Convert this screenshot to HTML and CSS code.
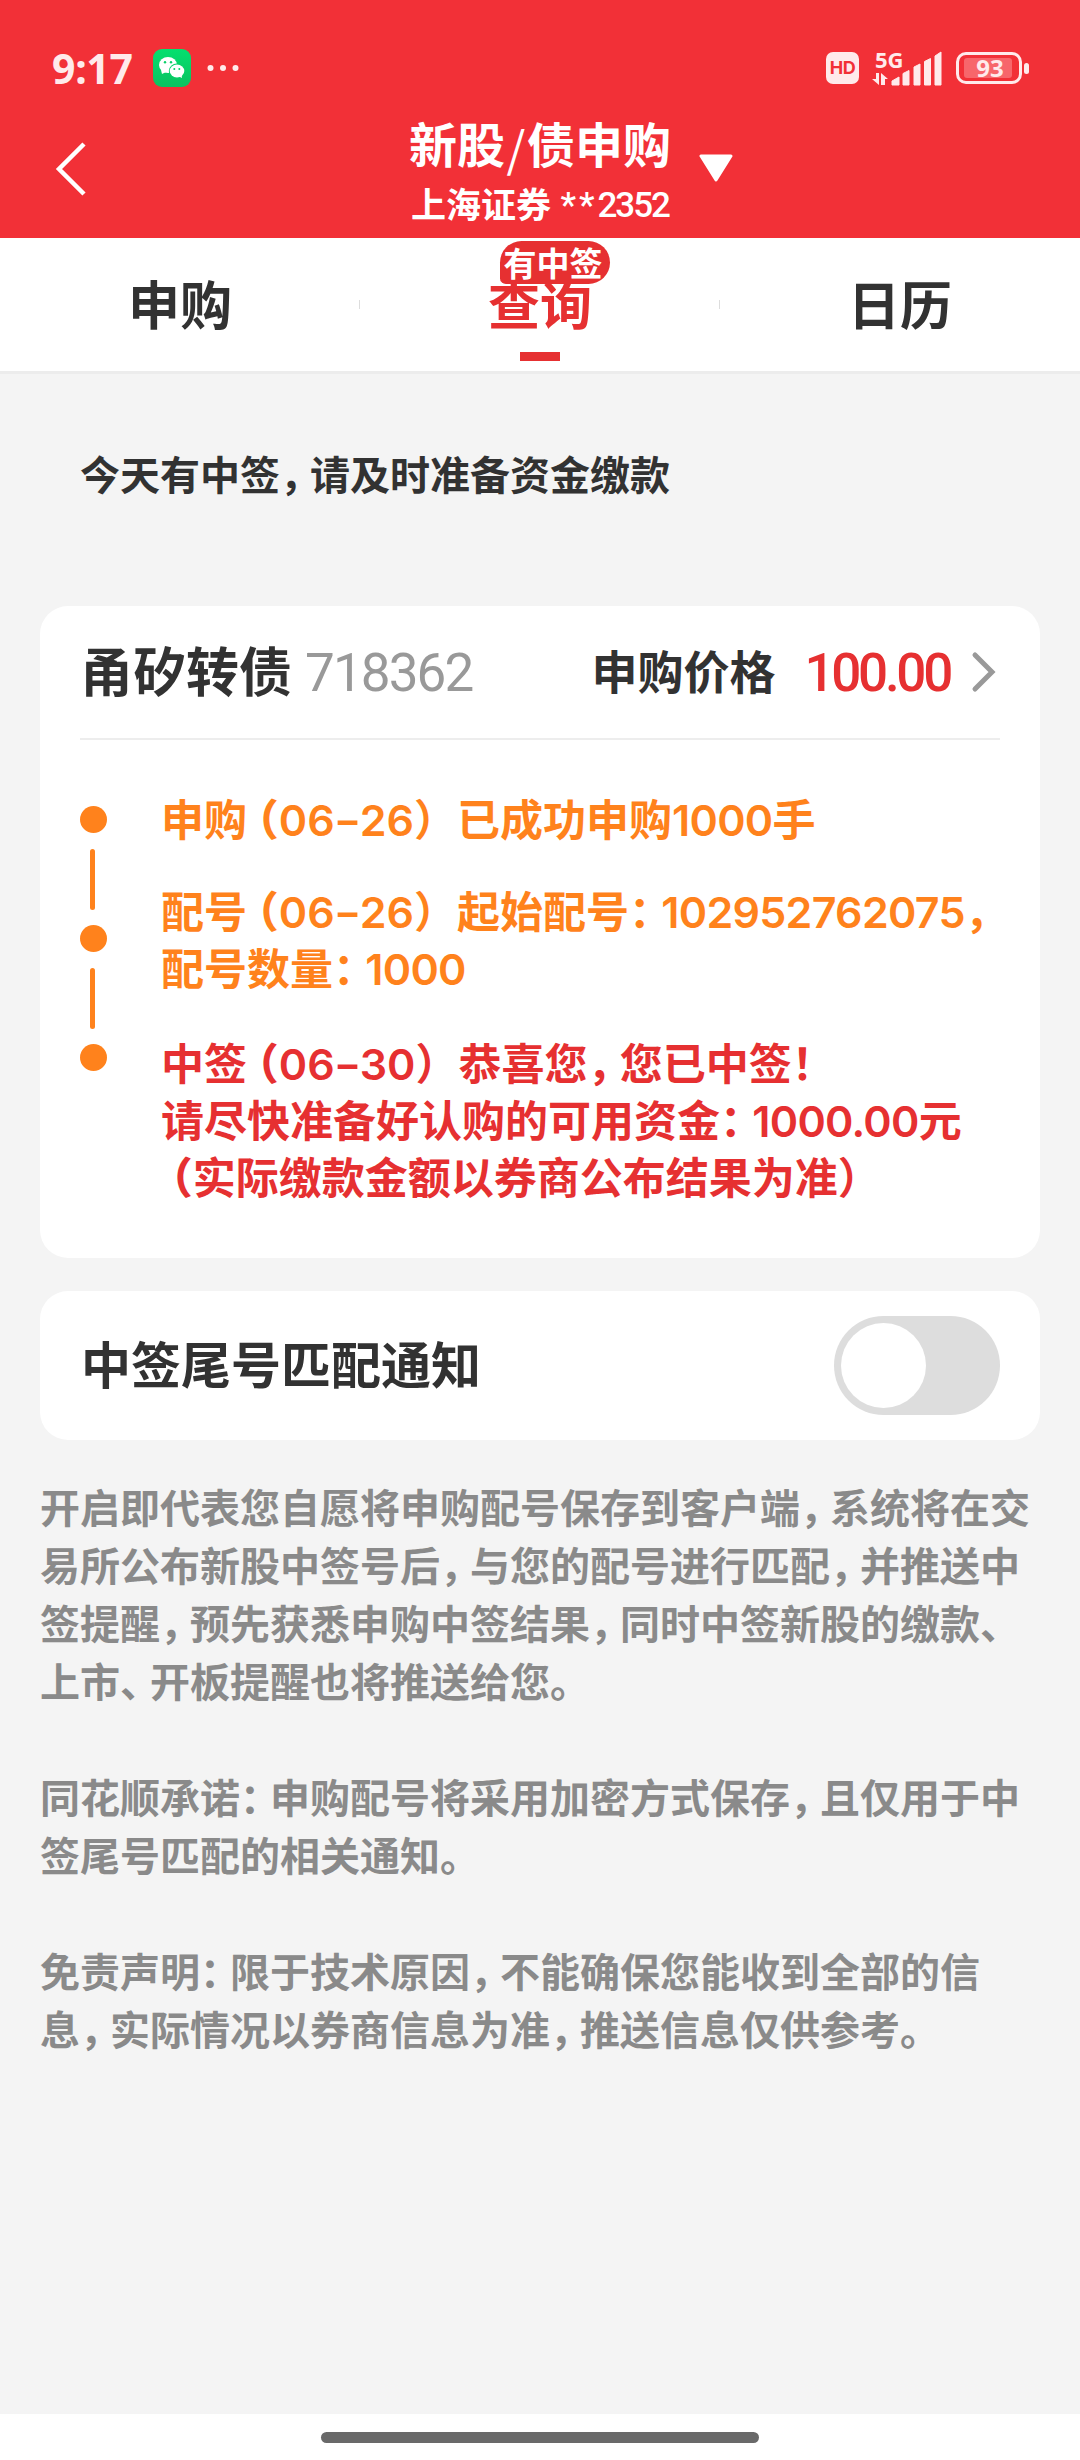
FILE: index.html
```html
<!DOCTYPE html>
<html lang="zh-CN">
<head>
    <meta charset="UTF-8">
    <title>新股/债申购</title>
    <link rel="stylesheet" href="styles.css">
</head>
<body>

<header class="header">
    <div class="status">
        <span class="time">9:17</span>
        <svg class="wechat" width="38" height="38" viewBox="0 0 38 38">
            <defs>
                <linearGradient id="wx" x1="0" y1="0" x2="0" y2="1">
                    <stop offset="0" stop-color="#04e06f"/>
                    <stop offset="1" stop-color="#0bc160"/>
                </linearGradient>
            </defs>
            <rect width="38" height="38" rx="9" fill="url(#wx)"/>
            <path d="M8 21l1 4 4-2z" fill="#fff"/>
            <ellipse cx="15" cy="16" rx="9" ry="8" fill="#fff"/>
            <ellipse cx="24" cy="22" rx="8.2" ry="7.4" fill="#08d067"/>
            <ellipse cx="24" cy="22" rx="7.3" ry="6.5" fill="#fff"/>
            <path d="M25 27l4 2-.5-4z" fill="#fff"/>
            <g fill="#08d067">
                <circle cx="12" cy="13.3" r="1.2"/><circle cx="18" cy="13.3" r="1.2"/>
                <circle cx="21.3" cy="20" r="1"/><circle cx="26.3" cy="20" r="1"/>
            </g>
        </svg>
        <svg class="more" width="32" height="8" viewBox="0 0 32 8" fill="#ffeaeb">
            <circle cx="3.5" cy="4" r="3"/><circle cx="16" cy="4" r="3"/><circle cx="28.5" cy="4" r="3"/>
        </svg>
        <span class="hd">HD</span>
        <div class="signal">
            <span class="net">5G</span>
            <svg width="70" height="36" viewBox="0 0 70 36" fill="#ffeaeb">
                <path d="M4 23h3v12L0 29h4zM9 23l7 6h-3v6H9z"/>
                <path d="M20 35v-4l7-4v8zM31 35V23.500l6-3V35zM42 35V17l6-3v21zM52.500 35V11.500l6-3V35zM63 35V6l6-4v33z" stroke="#ffeaeb" stroke-width="1" stroke-linejoin="round"/>
            </svg>
        </div>
        <div class="battery"><div class="level">93</div></div>
        <span class="nub"></span>
    </div>
    <div class="nav">
        <svg class="back" width="34" height="56" viewBox="0 0 34 56" fill="none" stroke="#fff" stroke-width="4.500">
            <path d="M30 3L5 28l25 25"/>
        </svg>
        <div class="title">
            <h1>新股<span class="slash">/</span>债申购</h1>
            <p>上海证券<span class="account"><span class="stars">**</span>2352</span></p>
        </div>
        <svg class="caret" width="34" height="28" viewBox="0 0 34 28" fill="#fff" stroke="#fff" stroke-width="3" stroke-linejoin="round">
            <path d="M2 2h30L17 26z"/>
        </svg>
    </div>
</header>

<nav class="tabs">
    <div class="tab">申购</div>
    <div class="tab active">查询<span class="badge">有中签</span></div>
    <div class="tab">日历</div>
</nav>

<main>
    <p class="tip">今天有中签<i>，</i>请及时准备资金缴款</p>

    <section class="card">
        <div class="card-head">
            <span class="name">甬矽转债</span>
            <span class="code">718362</span>
            <span class="label">申购价格</span>
            <span class="price">100.00</span>
            <svg class="arrow" width="26" height="42" viewBox="0 0 26 42" fill="none" stroke="#999" stroke-width="5" stroke-linecap="round">
                <path d="M4 4l17 17L4 38"/>
            </svg>
        </div>
        <div class="steps">
            <div class="rail">
                <span class="dot"></span>
                <span class="line"></span>
                <span class="dot"></span>
                <span class="line"></span>
                <span class="dot"></span>
            </div>
            <div class="logs">
                <p>申购<b>（</b>06<s>-</s>26）已成功申购<em>1000</em>手</p>
                <p>配号<b>（</b>06<s>-</s>26）起始配号<i>：</i><em>102952762075</em><i>，</i><br>配号数量<i>：</i><em>1000</em></p>
                <p class="win">中签<b>（</b>06<s>-</s>30）恭喜您<i>，</i>您已中签！<br>请尽快准备好认购的可用资金<i>：</i><em>1000.00</em>元<br><b>（</b>实际缴款金额以券商公布结果为准）</p>
            </div>
        </div>
    </section>

    <section class="card notice">
        <span>中签尾号匹配通知</span>
        <div class="switch"><span class="knob"></span></div>
    </section>

    <div class="terms">
        <p>开启即代表您自愿将申购配号保存到客户端<i>，</i>系统将在交<br>易所公布新股中签号后<i>，</i>与您的配号进行匹配<i>，</i>并推送中<br>签提醒<i>，</i>预先获悉申购中签结果<i>，</i>同时中签新股的缴款<i>、</i><br>上市<i>、</i>开板提醒也将推送给您。</p>
        <p>同花顺承诺<i>：</i>申购配号将采用加密方式保存<i>，</i>且仅用于中<br>签尾号匹配的相关通知。</p>
        <p>免责声明<i>：</i>限于技术原因<i>，</i>不能确保您能收到全部的信<br>息<i>，</i>实际情况以券商信息为准<i>，</i>推送信息仅供参考。</p>
    </div>
</main>

<footer class="home"><span></span></footer>

</body>
</html>
```
FILE: styles.css
```css
* { box-sizing: border-box; margin: 0; padding: 0; }
body { width: 1080px; height: 2460px; display: flex; flex-direction: column; background: #f4f4f4; color: #323232; font-family: Inter, "Noto Sans CJK SC", sans-serif; font-weight: bold; white-space: nowrap; }
svg { display: block; flex: none; }

/* full-width punctuation is set tighter than one em */
i { font-style: normal; letter-spacing: -0.25em; }
b { font-feature-settings: "halt"; margin-left: 0.24em; }
s { text-decoration: none; display: inline-block; width: 25px; text-align: center; transform: scaleX(1.4); }
em { font-style: normal; letter-spacing: -0.7px; }

.header { height: 238px; background: #f23037; color: #fff; }
.status { height: 110px; padding: 26px 51px 0 52px; display: flex; align-items: center; color: #ffeaeb; }
.time { width: 101px; font-family: "Noto Sans", sans-serif; font-size: 41px; line-height: 42px; letter-spacing: -0.3px; }
.more { margin-left: 16px; }
.hd { margin-left: auto; width: 33px; height: 32px; border-radius: 7px; background: #ffeaeb; color: #f23037; font-size: 18px; line-height: 32px; letter-spacing: -0.5px; text-align: center; }
.signal { position: relative; margin-left: 13px; }
.net { position: absolute; left: 3px; top: -3px; font-family: "Noto Sans", sans-serif; font-size: 22px; line-height: 24px; }
.battery { margin-left: 14px; width: 66px; height: 32px; padding: 3px 5px; border: 3px solid #ffeaeb; border-radius: 10px; }
.level { width: 48px; height: 20px; border-radius: 3px; background: #f7666b; font-family: "Noto Sans", sans-serif; font-size: 24px; line-height: 20px; text-align: center; padding-left: 4px; }
.nub { width: 5px; height: 11px; margin-left: 2px; border-radius: 3px; background: #ffeaeb; }

.nav { height: 128px; display: grid; grid-template-columns: 409px 262px 1fr; align-items: start; }
.back { margin: 31px 0 0 54px; }
.title h1 { margin-top: 6px; font-size: 48px; line-height: 60px; display: flex; }
.slash { width: 22px; text-align: center; font-family: "Noto Sans CJK SC", sans-serif; font-weight: 400; }
.title p { margin: 11px 2px 0 2px; font-size: 35px; line-height: 36px; display: flex; justify-content: space-between; }
.account { padding-top: 1px; font-family: Roboto, sans-serif; font-weight: 500; letter-spacing: -2px; }
.stars { letter-spacing: 3px; }
.caret { margin: 44px 0 0 28px; }

.tabs { height: 136px; display: flex; background: #fff; border-bottom: 3px solid #ececec; }
.tab { position: relative; flex: 1; display: flex; justify-content: center; font-size: 52px; line-height: 138px; }
.tab + .tab::before { content: ""; position: absolute; left: -1px; top: 62px; width: 1px; height: 9px; background: #ddd; }
.active { color: #e63031; }
.active::after { content: ""; position: absolute; left: 160px; top: 114px; width: 40px; height: 9px; background: #e63031; }
.badge { position: absolute; left: 140px; top: 3px; width: 110px; height: 43px; padding-right: 4px; border-radius: 22px 22px 22px 6px; background: #e63031; color: #fff; font-size: 33px; line-height: 46px; text-align: center; }

main { flex: 1; padding: 0 40px; }
.tip { height: 232px; padding-left: 40px; font-size: 40px; line-height: 204px; }
.card { border-radius: 28px; background: #fff; }
.card-head { height: 134px; margin: 0 40px; display: flex; align-items: center; line-height: 60px; border-bottom: 2px solid #ededed; }
.name { font-size: 53px; padding-top: 2px; }
.code, .price { padding-top: 2px; font-family: Roboto, sans-serif; font-size: 53px; }
.code { margin-left: 13px; letter-spacing: -1.9px; font-weight: 400; color: #999; }
.label { margin-left: auto; font-size: 46px; }
.price { margin-left: 29px; letter-spacing: -3.3px; font-weight: 500; color: #e63031; }
.arrow { margin: 0 3px 0 21px; }
.steps { height: 518px; padding: 66px 0 0 40px; display: flex; }
.rail { width: 27px; display: flex; flex-direction: column; align-items: center; }
.dot { width: 27px; height: 27px; border-radius: 50%; background: #ff821c; }
.line { width: 5px; height: 61px; margin: 15.500px 2px 15.500px 0; border-radius: 3px; background: #ff821c; }
.logs { margin: -14px 0 0 54px; color: #ff821c; font-size: 43px; font-weight: 600; line-height: 57px; }
.logs p { margin-bottom: 35px; }
.logs p + p { margin-bottom: 38px; }
.logs .win { color: #e63031; }

.notice { height: 149px; margin-top: 33px; padding: 0 40px 0 41px; display: flex; align-items: center; justify-content: space-between; font-size: 50px; line-height: 60px; }
.switch { width: 166px; height: 99px; padding: 7px; border-radius: 50px; background: #ddd; }
.knob { display: block; width: 85px; height: 85px; border-radius: 50%; background: #fff; }

.terms { margin-top: 40px; color: #8a8a8a; font-size: 40px; line-height: 58px; }
.terms p { margin-bottom: 58px; }

.home { height: 46px; padding-top: 18px; background: #fff; }
.home span { display: block; width: 438px; height: 11px; margin: 0 auto; border-radius: 6px; background: #696969; }
```
